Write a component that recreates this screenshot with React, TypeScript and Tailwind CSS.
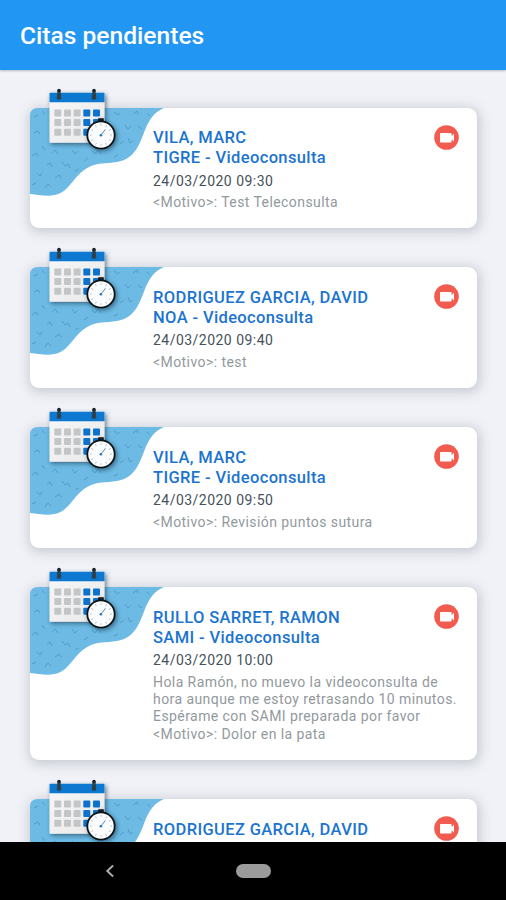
type Appointment = {
  client: string;
  pet?: string;
  date?: string;
  notes: string[];
  height: string;
};

const appointments: Appointment[] = [
  { client: 'VILA, MARC', pet: 'TIGRE - Videoconsulta', date: '24/03/2020 09:30', notes: ['<Motivo>: Test Teleconsulta'], height: 'h-[120.5px]' },
  { client: 'RODRIGUEZ GARCIA, DAVID', pet: 'NOA - Videoconsulta', date: '24/03/2020 09:40', notes: ['<Motivo>: test'], height: 'h-[120.5px]' },
  { client: 'VILA, MARC', pet: 'TIGRE - Videoconsulta', date: '24/03/2020 09:50', notes: ['<Motivo>: Revisión puntos sutura'], height: 'h-[120.5px]' },
  {
    client: 'RULLO SARRET, RAMON',
    pet: 'SAMI - Videoconsulta',
    date: '24/03/2020 10:00',
    notes: [
      'Hola Ramón, no muevo la videoconsulta de',
      'hora aunque me estoy retrasando 10 minutos.',
      'Espérame con SAMI preparada por favor',
      '<Motivo>: Dolor en la pata',
    ],
    height: 'h-[172.5px]',
  },
  { client: 'RODRIGUEZ GARCIA, DAVID', notes: [], height: 'h-[120.5px]' },
];

const columns = [24.3, 34, 43.6, 53.3, 63];
const rows = [1.4, 11.1, 20.8];
const ticks = [0, 30, 60, 90, 120, 150, 180, 210, 240, 270, 300, 330];

// Small squiggles scattered over the blue wave
const squiggles = [
  'M4 9l4-2', 'M12 3l3 3', 'M84 4l4 3 2-2', 'M103 6l4-3 1 3', 'M117 5l3 3', 'M95 17l3 4 3-3', 'M108 18l4 3',
  'M4 25l4-2 2 3', 'M12 38l3 4', 'M2 48l4-3 2 3', 'M22 45l3-3 3 4', 'M42 42l3 4 3-3', 'M62 43l3 3 3-4 3 4', 'M90 36l4-3',
  'M98 30l2 5 3-2', 'M84 49l4-2', 'M17 57l3-2 2 4', 'M32 54l3 4 3-2 2 4', 'M7 65l3 3 2-3', 'M25 70l4-3 2 3', 'M2 77l4-2', 'M15 80l3-4 3 3', 'M45 63l4-2', 'M54 53l4-3',
];

function CalendarArt() {
  return (
    <svg className="absolute -top-6 left-0 overflow-visible" width="140" height="120" viewBox="0 -24 140 120" aria-hidden="true">
      <defs>
        <filter id="soft" x="-30%" y="-30%" width="170%" height="170%">
          <feDropShadow dx="1.5" dy="1.8" stdDeviation="2" floodColor="#17344a" floodOpacity="0.6" />
        </filter>
        <linearGradient id="paper" x1="0" y1="0" x2="1" y2="1">
          <stop offset="0" stopColor="#f7f7f7" />
          <stop offset="1" stopColor="#e9e9e9" />
        </linearGradient>
      </defs>
      <path d="M0 8Q0 0 8 0H134C124 4 119 12 115 22C109 38 105 47 94 52C84 56 74 54 64 57C47 62 42 79 31 84.8C21 90 10 87 0 86Z" fill="#6dbae4" />
      <g fill="none" stroke="#4389b5" strokeWidth="0.8" opacity="0.75">
        {squiggles.map((d) => <path key={d} d={d} />)}
      </g>
      <g filter="url(#soft)">
        <rect x="19.5" y="-15.3" width="55" height="50" rx="0.8" fill="url(#paper)" />
        <path d="M19.5-5.7V-14.5q0-.8.8-.8H73.7q.8 0 .8.8V-5.7Z" fill="#0b78d0" />
      </g>
      {rows.map((y) => columns.map((x, i) => (
        <rect key={`${x}-${y}`} x={x} y={y} width="7" height="7" rx="1" fill={i > 2 ? '#0c72ce' : '#c3c5c6'} />
      )))}
      {[29, 64].map((x) => (
        <g key={x}>
          <path d={`M${x - 2.3}-9L${x - 1.5}-17.8q1.5-2.4 3 0L${x + 2.3}-9q-2.3 1.5-4.6 0Z`} fill="#2e4149" />
          <circle cx={x} cy="-17.6" r="1.7" fill="#172329" />
        </g>
      ))}
      <g filter="url(#soft)">
        <path d="M68.2 10.3h5.6v2.6h-1.4v2h-2.8v-2h-1.4z" fill="#15191c" />
        <circle cx="71" cy="27" r="13.7" fill="#fbfcfd" stroke="#111619" strokeWidth="1.8" />
      </g>
      <g stroke="#8b949b" strokeWidth="0.6">
        {ticks.map((a) => <path key={a} d="M71 16v1.7" transform={`rotate(${a} 71 27)`} />)}
      </g>
      <path d="M70.7 27.4l4.7-6" stroke="#4179a9" strokeWidth="0.9" />
      <circle cx="70.9" cy="27.2" r="1.3" fill="#2377bd" />
    </svg>
  );
}

function VideoBadge() {
  return (
    <svg className="absolute top-[17px] right-[18px]" width="25" height="25" viewBox="0 0 25 25" aria-label="Videoconsulta">
      <circle cx="12.5" cy="12.5" r="12.3" fill="#f15b50" />
      <path d="M6 8.7q0-.8.8-.8h10q.8 0 .8.8v2.4l2.4-2.3v7.8l-2.4-2.3v2.4q0 .8-.8.8H6.8q-.8 0-.8-.8z" fill="#fff" />
    </svg>
  );
}

function Card({ item }: { item: Appointment }) {
  return (
    <article className={`relative w-[447px] shrink-0 rounded-[9px] bg-white pt-[20.5px] pl-[123px] shadow-[1px_2px_12px_2px_rgba(75,85,100,0.25)] ${item.height}`}>
      <CalendarArt />
      <VideoBadge />
      <h2 className="text-[16.5px] leading-5 font-medium tracking-[0.37px] whitespace-nowrap text-[#1b74cf]">
        <span className="block">{item.client}</span>
        {item.pet && <span className="block">{item.pet}</span>}
      </h2>
      {item.date && <p className="mt-[2.5px] text-[14px] leading-5 tracking-[0.47px] text-[#45515a]">{item.date}</p>}
      {item.notes.length > 0 && (
        <div className="mt-[3.5px] text-[14px] leading-[17.3px] tracking-[0.43px] whitespace-nowrap text-[#92999d]">
          {item.notes.map((line) => <p key={line}>{line}</p>)}
        </div>
      )}
    </article>
  );
}

export default function App() {
  return (
    <div className="flex h-[900px] w-[506px] flex-col overflow-hidden bg-[#f0f2f7] font-['Roboto',sans-serif]">
      <header className="z-10 flex h-[69.5px] shrink-0 items-center bg-[#2196f3] pt-0.5 pl-5 shadow-[0_1px_2px_rgba(50,60,80,0.3)]">
        <h1 className="text-[24.6px] leading-8 font-medium text-white">Citas pendientes</h1>
      </header>
      <main className="flex min-h-0 flex-1 flex-col gap-[39.4px] overflow-hidden pt-[38px] pl-[30px]">
        {appointments.map((item, index) => <Card key={index} item={item} />)}
      </main>
      <nav className="z-10 flex h-[58.5px] shrink-0 items-center bg-black pl-[105px]">
        <svg width="10" height="14" viewBox="0 0 10 14" aria-label="Atrás">
          <path d="M8.1 1.5L2.3 7l5.8 5.5" fill="none" stroke="#aaa" strokeWidth="2" />
        </svg>
        <span className="ml-[121px] h-[13.5px] w-[35px] rounded-full bg-[#9b9b9b]" />
      </nav>
    </div>
  );
}
